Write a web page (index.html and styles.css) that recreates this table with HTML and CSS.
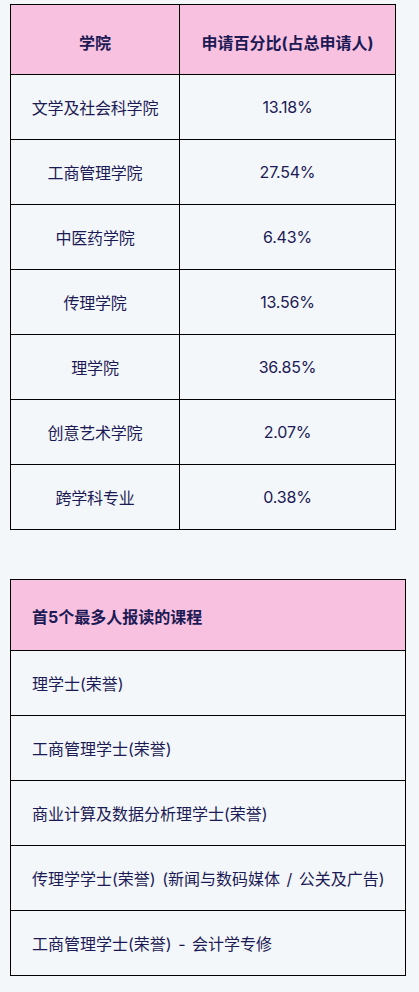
FILE: index.html
```html
<!DOCTYPE html>
<html lang="zh">
<head>
<meta charset="utf-8">
<link rel="stylesheet" href="styles.css">
</head>
<body>
<div class="page">
  <table class="t1">
    <thead>
      <tr><th class="c1">学院</th><th class="c2">申请百分比(占总申请人)</th></tr>
    </thead>
    <tbody>
      <tr><td>文学及社会科学院</td><td>13.18%</td></tr>
      <tr><td>工商管理学院</td><td>27.54%</td></tr>
      <tr><td>中医药学院</td><td>6.43%</td></tr>
      <tr><td>传理学院</td><td>13.56%</td></tr>
      <tr><td>理学院</td><td>36.85%</td></tr>
      <tr><td>创意艺术学院</td><td>2.07%</td></tr>
      <tr><td>跨学科专业</td><td>0.38%</td></tr>
    </tbody>
  </table>
  <table class="t2">
    <thead>
      <tr><th>首5个最多人报读的课程</th></tr>
    </thead>
    <tbody>
      <tr><td>理学士(荣誉)</td></tr>
      <tr><td>工商管理学士(荣誉)</td></tr>
      <tr><td>商业计算及数据分析理学士(荣誉)</td></tr>
      <tr><td>传理学学士(荣誉) (新闻与数码媒体 / 公关及广告)</td></tr>
      <tr><td>工商管理学士(荣誉) - 会计学专修</td></tr>
    </tbody>
  </table>
</div>
</body>
</html>
```
FILE: styles.css
```css
html, body {
  margin: 0;
  padding: 0;
  background: #f3f7fa;
}
body {
  font-family: Inter, "Noto Sans CJK SC", sans-serif;
  color: #1c1a55;
  font-size: 16px;
}
.page {
  padding: 4px 0 0 10px;
  display: flex;
  flex-direction: column;
  align-items: flex-start;
  gap: 49px;
}
table {
  border-collapse: collapse;
  border: 1px solid #000;
}
th, td {
  border: 1px solid #000;
  padding: 0;
}
th {
  background: #f9c1e0;
  font-weight: 700;
}
.t1 {
  width: 386px;
}
.t1 th {
  height: 70px;
  padding-top: 4px;
  box-sizing: border-box;
  text-align: center;
}
.t1 .c1 { width: 169px; }
.t1 td {
  height: 65px;
  box-sizing: border-box;
  text-align: center;
  letter-spacing: -0.2px;
}
.t2 {
  width: 396px;
}
.t2 th {
  height: 71px;
  padding-top: 2px;
  box-sizing: border-box;
  text-align: left;
  padding-left: 21px;
}
.t2 td {
  height: 65px;
  box-sizing: border-box;
  text-align: left;
  padding-left: 21px;
  word-spacing: 2px;
}
```
